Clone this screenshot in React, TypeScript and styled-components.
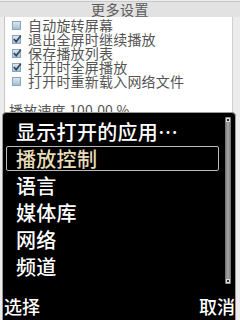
import React from "react";
import styled, { createGlobalStyle } from "styled-components";

const Global = createGlobalStyle`
  html, body { margin: 0; padding: 0; background: #000; }
  #root { width: 240px; height: 320px; overflow: hidden; }
`;

const FONT = `"Noto Sans CJK SC", "Noto Sans", sans-serif`;

const Screen = styled.div`
  position: relative;
  width: 240px;
  height: 320px;
  overflow: hidden;
  background: #ececec;
  font-family: ${FONT};
  display: flex;
  flex-direction: column;
`;

const Header = styled.div`
  height: 15px;
  margin-top: 1px;
  border-top: 1px solid #c8c8c8;
  background: #e2e2e2;
  color: #5a5a5a;
  font-size: 14px;
  line-height: 15px;
  text-align: center;
  letter-spacing: 0.5px;
`;

const Panel = styled.div`
  margin: 0 7px 0 4px;
  flex: 1;
  background: #fff;
  border-left: 1px solid #c4c4c4;
  border-right: 1px solid #d0d0d0;
  padding-top: 1px;
  display: flex;
  flex-direction: column;
`;

const Row = styled.div`
  height: 14px;
  display: flex;
  align-items: center;
  padding-left: 7px;
  gap: 7px;
  color: #555;
  font-size: 14px;
  line-height: 14px;
  letter-spacing: 0.2px;
  overflow: visible;
`;

const Box = styled.span`
  width: 9px;
  height: 9px;
  background: linear-gradient(#dbe6f1, #a7bed4);
  border: 1px solid #8aa4bd;
  box-sizing: border-box;
  position: relative;
  flex: none;
`;

const Mark = styled.svg`
  position: absolute;
  left: -1px;
  top: -2px;
`;

const Speed = styled.div`
  margin-top: 15px;
  padding-left: 4px;
  color: #555;
  font-size: 14px;
  line-height: 14px;
  letter-spacing: 0.2px;
`;

const Popup = styled.div`
  position: absolute;
  left: 2px;
  right: 4px;
  top: 112px;
  bottom: -3px;
  background: #000;
  border: 1px solid #9a9a9a;
  border-radius: 4px 4px 0 0;
  display: flex;
  flex-direction: column;
`;

const List = styled.div`
  padding: 5px 16px 0 3px;
  display: flex;
  flex-direction: column;
`;

const Item = styled.div<{ $active?: boolean }>`
  display: flex;
  align-items: center;
  padding-left: ${(p) => (p.$active ? "9px" : "10px")};
  box-sizing: border-box;
  font-size: 20px;
  font-weight: 500;
  color: ${(p) => (p.$active ? "#e9dcb8" : "#fff")};
  border: ${(p) => (p.$active ? "1px solid #b9b9b9" : "none")};
  border-radius: 2px;
  height: ${(p) => (p.$active ? "25px" : "27px")};
  margin: ${(p) => (p.$active ? "1px 0" : "0")};
  letter-spacing: 0.3px;
`;

const Scroll = styled.div`
  position: absolute;
  right: 4px;
  top: 4px;
  width: 6px;
  height: 167px;
  background: linear-gradient(90deg, #6e6e6e, #a8a8a8, #6e6e6e);
  border-radius: 1px;
`;

const Knob = styled.div<{ $bottom?: boolean }>`
  position: absolute;
  left: 1px;
  ${(p) => (p.$bottom ? "bottom: 1px;" : "top: 1px;")}
  width: 4px;
  height: 4px;
  background: #2a2a2a;
  border: 1px solid #ddd;
  box-sizing: border-box;
`;

const Softkeys = styled.div`
  margin-top: auto;
  margin-bottom: 5px;
  display: flex;
  justify-content: space-between;
  padding: 0 0 0 1px;
  color: #fff;
  font-size: 18px;
  font-weight: 500;
  line-height: 22px;
`;

const Check = () => (
  <Mark width="10" height="10" viewBox="0 0 10 10">
    <path d="M1.8 5 L4.2 7.6 L8.8 1.8" stroke="#33485c" strokeWidth="1.7" fill="none" />
  </Mark>
);

const options: [string, boolean][] = [
  ["自动旋转屏幕", false],
  ["退出全屏时继续播放", true],
  ["保存播放列表", true],
  ["打开时全屏播放", true],
  ["打开时重新载入网络文件", false],
];

const items = ["显示打开的应用…", "播放控制", "语言", "媒体库", "网络", "频道"];

export default function App() {
  return (
    <Screen>
      <Global />
      <Header>更多设置</Header>
      <Panel>
        {options.map(([label, on]) => (
          <Row key={label}>
            <Box>{on && <Check />}</Box>
            <span>{label}</span>
          </Row>
        ))}
        <Speed>播放速度 100.00 %</Speed>
      </Panel>
      <Popup>
        <List>
          {items.map((t, i) => (
            <Item key={t} $active={i === 1}>
              {t}
            </Item>
          ))}
        </List>
        <Scroll>
          <Knob />
          <Knob $bottom />
        </Scroll>
        <Softkeys>
          <span>选择</span>
          <span>取消</span>
        </Softkeys>
      </Popup>
    </Screen>
  );
}
